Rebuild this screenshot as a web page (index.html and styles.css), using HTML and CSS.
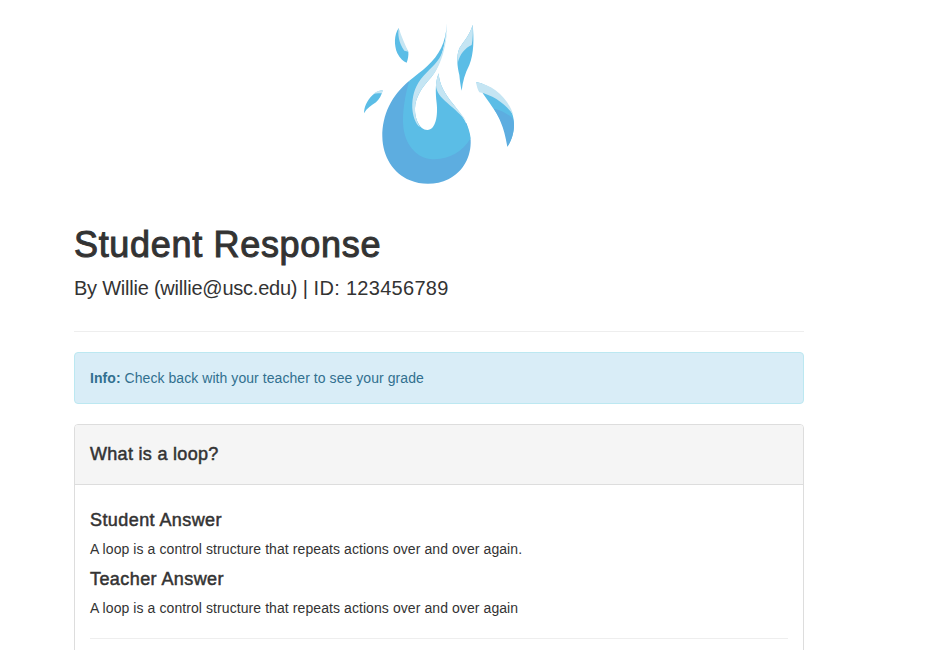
FILE: index.html
```html
<!DOCTYPE html>
<html lang="en">
<head>
<meta charset="utf-8">
<title>Student Response</title>
<link rel="stylesheet" href="styles.css">
</head>
<body>
<main class="page">
  <div class="logo-row">
    <svg class="logo" viewBox="-3 0 540 555" width="180" height="185" aria-label="Flame logo">
      <path fill="#5dade0" d="M178 212C125 255 96 315 97 380C98 440 130 490 180 511C215 526 260 525 295 508C340 485 364 440 362 390L350 340L240 400L170 300Z"/>
      <path fill="#5bbde6" d="M291 40C287 100 268 135 232 168C215 184 195 198 178 212C165 255 156 310 160 350C165 400 195 440 240 447C290 452 335 430 362 385C358 345 335 315 310 283C285 252 268 225 266 190C256 215 256 245 260 280C264 315 258 360 232 360C208 360 194 325 195 295C196 262 215 232 245 200C272 170 288 95 291 40Z"/>
      <path fill="#c5e5f3" d="M291 50C288 90 280 125 268 145C252 170 225 188 205 218C190 242 184 275 188 305C191 325 198 342 210 352C200 335 194 315 195 295C196 262 215 232 245 200C272 170 291 105 291 50Z"/>
      <path fill="#c5e5f3" d="M266 190C268 225 285 252 310 283C325 301 340 318 350 337C335 315 312 297 293 280C272 262 258 245 258 225C259 212 262 200 266 190Z"/>
      <path fill="#5bbde6" d="M146 54C132 75 132 105 142 130C150 145 160 155 170 158C174 148 176 135 175 125C160 105 150 80 146 54Z"/>
      <path fill="#c5e5f3" d="M146 54C143 72 146 100 163 122L175 125C165 105 155 80 146 54Z"/>
      <path fill="#5bbde6" d="M368 44C360 75 340 95 328 115C318 140 322 170 328 195C330 215 332 230 335 242C338 215 345 190 358 165C372 130 372 85 368 44Z"/>
      <path fill="#c5e5f3" d="M368 44C360 75 340 95 328 115C322 130 321 145 323 160C330 130 345 115 365 105C369 85 369 65 368 44Z"/>
      <path fill="#5bbde6" d="M378 216C400 260 440 300 458 345C468 370 474 390 472 410C490 385 497 345 488 315C470 265 425 225 378 216Z"/>
      <path fill="#5dade0" d="M432 296C445 320 462 345 472 410C490 385 497 345 488 325C470 308 450 300 432 296Z"/>
      <path fill="#c5e5f3" d="M378 216C430 225 475 265 490 315C470 285 430 255 388 247C383 240 380 228 378 216Z"/>
      <path fill="#5bbde6" d="M98 241C75 243 58 262 48 283C44 292 42 302 42 310C50 295 65 285 78 277C88 268 95 255 98 241Z"/>
      <path fill="#c5e5f3" d="M98 241C88 241 78 245 70 252C80 250 90 250 96 250Z"/>
    </svg>
  </div>
  <header class="page-header">
    <h1 class="title">Student Response</h1>
    <p class="byline"><span class="byline-name">By Willie (willie@usc.edu)</span> | <span class="byline-id">ID: 123456789</span></p>
  </header>
  <div class="alert"><strong>Info:</strong> Check back with your teacher to see your grade</div>
  <section class="panel">
    <h2 class="panel-heading">What is a loop?</h2>
    <div class="panel-body">
      <h3 class="answer-title">Student Answer</h3>
      <p class="answer">A loop is a control structure that repeats actions over and over again.</p>
      <h3 class="answer-title">Teacher Answer</h3>
      <p class="answer">A loop is a control structure that repeats actions over and over again</p>
      <hr class="divider">
    </div>
  </section>
</main>
</body>
</html>
```

FILE: styles.css
```css
html, body {
  margin: 0;
  height: 650px;
  overflow: hidden;
  background: #fff;
}
body {
  font-family: "Liberation Sans", Arial, sans-serif;
  font-size: 14px;
  line-height: 20px;
  color: #333;
}
.page {
  width: 730px;
  margin-left: 74px;
}
.logo-row {
  display: flex;
  justify-content: center;
  padding-top: 10px;
}
.logo {
  display: block;
}
.page-header {
  padding-bottom: 29px;
  border-bottom: 1px solid #eee;
}
.title {
  margin: 30px 0 0;
  font-size: 36px;
  line-height: 40px;
  font-weight: 400;
  -webkit-text-stroke: 1px #333;
  letter-spacing: 0.68px;
}
.byline {
  margin: 9px 0 0;
  font-size: 20px;
  line-height: 28px;
}
.byline-name {
  letter-spacing: -0.23px;
}
.byline-id {
  letter-spacing: 0.3px;
}
.alert {
  margin-top: 20px;
  padding: 15px;
  background: #d9edf7;
  border: 1px solid #bce8f1;
  border-radius: 4px;
  color: #31708f;
  letter-spacing: 0.06px;
}
.panel {
  margin-top: 20px;
  border: 1px solid #ddd;
  border-radius: 4px;
  min-height: 300px;
}
.panel-heading {
  margin: 0;
  padding: 19px 15px 20px;
  background: #f5f5f5;
  border-bottom: 1px solid #ddd;
  border-radius: 3px 3px 0 0;
  font-size: 18px;
  line-height: 20px;
  font-weight: 400;
  -webkit-text-stroke: 0.5px #333;
  letter-spacing: 0.3px;
}
.panel-body {
  padding: 25px 15px 15px;
}
.answer-title {
  margin: 0;
  font-size: 18px;
  line-height: 20px;
  font-weight: 400;
  -webkit-text-stroke: 0.5px #333;
  letter-spacing: 0.42px;
}
.answer {
  margin: 9px 0 10px;
  font-size: 14px;
  line-height: 20px;
  letter-spacing: 0.08px;
}
.divider {
  margin: 20px 0 0;
  border: 0;
  border-top: 1px solid #eee;
}
```
